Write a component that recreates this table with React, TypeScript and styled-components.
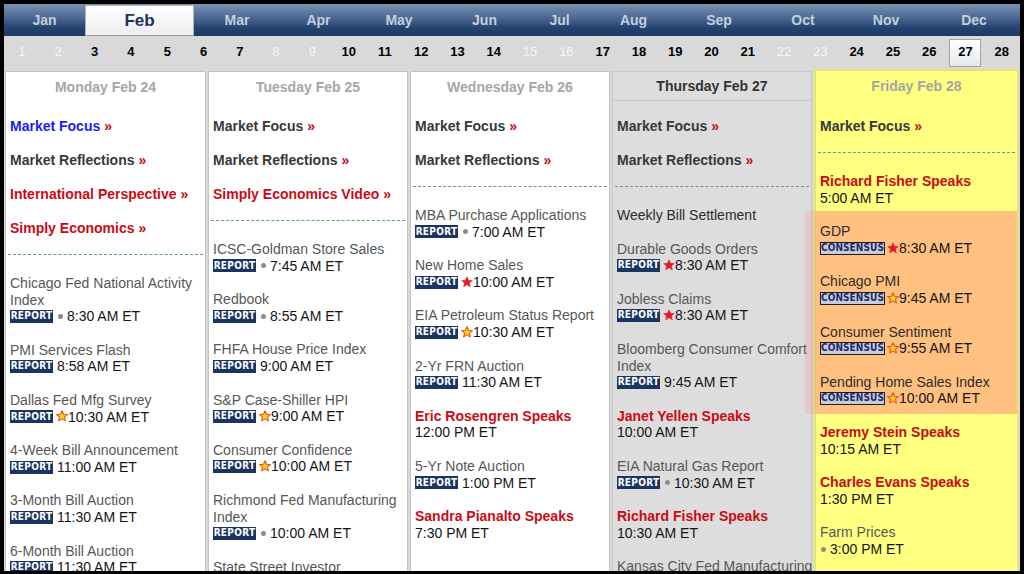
import React from 'react';
import styled, { createGlobalStyle, css } from 'styled-components';

const GlobalStyle = createGlobalStyle`
  html, body {
    margin: 0;
    padding: 0;
    background: #000;
  }
  body {
    font-family: 'Liberation Sans', Arial, sans-serif;
  }
`;

const RED = '#cc0a14';

type Mark = 'none' | 'dot' | 'red' | 'gold';
type Badge = 'report' | 'consensus' | 'none';

interface IEvent {
  title: string;
  speaker?: boolean;
  badge?: Badge;
  mark?: Mark;
  time?: string;
  dark?: boolean;
}

interface ILink {
  text: string;
  tone: 'blue' | 'dark' | 'red';
}

interface IDay {
  label: string;
  kind: 'past' | 'today' | 'selected';
  width: number;
  links: ILink[];
  events: IEvent[];
  highlight?: IEvent[];
  after?: IEvent[];
}

const months: [string, number][] = [
  ['Jan', 81], ['Feb', 109], ['Mar', 86], ['Apr', 77], ['May', 84], ['Jun', 87],
  ['Jul', 63], ['Aug', 85], ['Sep', 86], ['Oct', 82], ['Nov', 84], ['Dec', 92],
];

const weekend = [1, 2, 8, 9, 15, 16, 22, 23];

const days: IDay[] = [
  {
    label: 'Monday Feb 24',
    kind: 'past',
    width: 201,
    links: [
      { text: 'Market Focus', tone: 'blue' },
      { text: 'Market Reflections', tone: 'dark' },
      { text: 'International Perspective', tone: 'red' },
      { text: 'Simply Economics', tone: 'red' },
    ],
    events: [
      { title: 'Chicago Fed National Activity\nIndex', badge: 'report', mark: 'dot', time: '8:30 AM ET' },
      { title: 'PMI Services Flash', badge: 'report', time: '8:58 AM ET' },
      { title: 'Dallas Fed Mfg Survey', badge: 'report', mark: 'gold', time: '10:30 AM ET' },
      { title: '4-Week Bill Announcement', badge: 'report', time: '11:00 AM ET' },
      { title: '3-Month Bill Auction', badge: 'report', time: '11:30 AM ET' },
      { title: '6-Month Bill Auction', badge: 'report', time: '11:30 AM ET' },
    ],
  },
  {
    label: 'Tuesday Feb 25',
    kind: 'past',
    width: 200,
    links: [
      { text: 'Market Focus', tone: 'dark' },
      { text: 'Market Reflections', tone: 'dark' },
      { text: 'Simply Economics Video', tone: 'red' },
    ],
    events: [
      { title: 'ICSC-Goldman Store Sales', badge: 'report', mark: 'dot', time: '7:45 AM ET' },
      { title: 'Redbook', badge: 'report', mark: 'dot', time: '8:55 AM ET' },
      { title: 'FHFA House Price Index', badge: 'report', time: '9:00 AM ET' },
      { title: 'S&P Case-Shiller HPI', badge: 'report', mark: 'gold', time: '9:00 AM ET' },
      { title: 'Consumer Confidence', badge: 'report', mark: 'gold', time: '10:00 AM ET' },
      { title: 'Richmond Fed Manufacturing\nIndex', badge: 'report', mark: 'dot', time: '10:00 AM ET' },
      { title: 'State Street Investor\nConfidence Index', badge: 'report', time: '10:00 AM ET' },
    ],
  },
  {
    label: 'Wednesday Feb 26',
    kind: 'past',
    width: 200,
    links: [
      { text: 'Market Focus', tone: 'dark' },
      { text: 'Market Reflections', tone: 'dark' },
    ],
    events: [
      { title: 'MBA Purchase Applications', badge: 'report', mark: 'dot', time: '7:00 AM ET' },
      { title: 'New Home Sales', badge: 'report', mark: 'red', time: '10:00 AM ET' },
      { title: 'EIA Petroleum Status Report', badge: 'report', mark: 'gold', time: '10:30 AM ET' },
      { title: '2-Yr FRN Auction', badge: 'report', time: '11:30 AM ET' },
      { title: 'Eric Rosengren Speaks', speaker: true, time: '12:00 PM ET' },
      { title: '5-Yr Note Auction', badge: 'report', time: '1:00 PM ET' },
      { title: 'Sandra Pianalto Speaks', speaker: true, time: '7:30 PM ET' },
    ],
  },
  {
    label: 'Thursday Feb 27',
    kind: 'today',
    width: 200,
    links: [
      { text: 'Market Focus', tone: 'dark' },
      { text: 'Market Reflections', tone: 'dark' },
    ],
    events: [
      { title: 'Weekly Bill Settlement', dark: true },
      { title: 'Durable Goods Orders', badge: 'report', mark: 'red', time: '8:30 AM ET' },
      { title: 'Jobless Claims', badge: 'report', mark: 'red', time: '8:30 AM ET' },
      { title: 'Bloomberg Consumer Comfort\nIndex', badge: 'report', time: '9:45 AM ET' },
      { title: 'Janet Yellen Speaks', speaker: true, time: '10:00 AM ET' },
      { title: 'EIA Natural Gas Report', badge: 'report', mark: 'dot', time: '10:30 AM ET' },
      { title: 'Richard Fisher Speaks', speaker: true, time: '10:30 AM ET' },
      { title: 'Kansas City Fed Manufacturing\nIndex', badge: 'report', time: '11:00 AM ET' },
    ],
  },
  {
    label: 'Friday Feb 28',
    kind: 'selected',
    width: 205,
    links: [{ text: 'Market Focus', tone: 'dark' }],
    events: [{ title: 'Richard Fisher Speaks', speaker: true, time: '5:00 AM ET' }],
    highlight: [
      { title: 'GDP', badge: 'consensus', mark: 'red', time: '8:30 AM ET', dark: true },
      { title: 'Chicago PMI', badge: 'consensus', mark: 'gold', time: '9:45 AM ET', dark: true },
      { title: 'Consumer Sentiment', badge: 'consensus', mark: 'gold', time: '9:55 AM ET', dark: true },
      { title: 'Pending Home Sales Index', badge: 'consensus', mark: 'gold', time: '10:00 AM ET', dark: true },
    ],
    after: [
      { title: 'Jeremy Stein Speaks', speaker: true, time: '10:15 AM ET' },
      { title: 'Charles Evans Speaks', speaker: true, time: '1:30 PM ET' },
      { title: 'Farm Prices', badge: 'none', mark: 'dot', time: '3:00 PM ET' },
    ],
  },
];

const Frame = styled.div`
  width: 1024px;
  height: 574px;
  box-sizing: border-box;
  border: 4px solid #000;
  border-bottom-width: 3px;
  background: #d9d9d9;
  display: flex;
  flex-direction: column;
  overflow: hidden;
`;

const MonthBar = styled.div`
  display: flex;
  flex: none;
  height: 32px;
  background: linear-gradient(#7a92b3 0%, #4a6690 45%, #24426f 75%, #1d3a66 100%);
`;

const MonthCell = styled.div<{ $w: number; $active?: boolean }>`
  width: ${(p) => p.$w}px;
  flex: none;
  box-sizing: border-box;
  display: flex;
  align-items: center;
  justify-content: center;
  font-size: 14px;
  font-weight: bold;
  color: #c4cfdc;
  ${(p) =>
    p.$active &&
    css`
      margin-top: 1px;
      font-size: 17px;
      color: #1b325a;
      background: linear-gradient(#ffffff, #eeeef0);
      border: 1px solid #b4b4b4;
      border-bottom-color: #9a9a9a;
    `}
`;

const DayRow = styled.div`
  display: flex;
  flex: none;
  height: 30px;
  background: #d9d9d9;
`;

const DayCell = styled.div`
  flex: 1;
  display: flex;
  justify-content: center;
  position: relative;
`;

const DayNum = styled.span<{ $weekend?: boolean; $current?: boolean }>`
  display: flex;
  align-items: center;
  justify-content: center;
  height: 30px;
  font-size: 13px;
  font-weight: ${(p) => (p.$weekend ? 'normal' : 'bold')};
  color: ${(p) => (p.$weekend ? '#f6f6f6' : '#000')};
  ${(p) =>
    p.$current &&
    css`
      box-sizing: border-box;
      margin-top: 3px;
      width: 32px;
      height: 28px;
      border: 1px solid #a4a4a4;
      background: linear-gradient(#ffffff, #e6e8ec);
      position: relative;
      z-index: 2;
      padding-bottom: 3px;
    `}
`;

const Columns = styled.div`
  flex: 1;
  min-height: 0;
  display: flex;
  gap: 2px;
  padding: 5px 0 0 1px;
`;

const Column = styled.div<{ $w: number; $kind: IDay['kind'] }>`
  width: ${(p) => p.$w}px;
  flex: none;
  box-sizing: border-box;
  background: #fff;
  border: 1px solid #c4c4c4;
  border-bottom: none;
  ${(p) =>
    p.$kind === 'today' &&
    css`
      background: #dddddd;
      border-color: #c8c8c8;
    `}
  ${(p) =>
    p.$kind === 'selected' &&
    css`
      margin-top: -2px;
      background: #ffff80;
      border: 2px solid #e4e470;
      border-bottom: none;
    `}
`;

const DayHead = styled.div<{ $kind: IDay['kind'] }>`
  height: ${(p) => (p.$kind === 'selected' ? 30 : 29)}px;
  display: flex;
  align-items: center;
  justify-content: center;
  font-size: 14px;
  font-weight: bold;
  color: ${(p) => (p.$kind === 'today' ? '#333' : '#a6a6a6')};
  ${(p) =>
    p.$kind === 'today' &&
    css`
      border-bottom: 1px solid #c2c2c2;
      height: 28px;
    `}
`;

const LinkList = styled.div`
  padding: 8px 0 0 4px;
`;

const LinkRow = styled.div<{ $tone: ILink['tone'] }>`
  line-height: 34px;
  font-size: 14px;
  font-weight: bold;
  white-space: nowrap;
  color: ${(p) => (p.$tone === 'blue' ? '#1c1cf5' : p.$tone === 'red' ? RED : '#383838')};
  span {
    color: ${RED};
  }
`;

const Divider = styled.div`
  margin: 9px 2px 20px 2px;
  border-top: 1px dashed #5b9c9c;
`;

const EventList = styled.div`
  padding-left: 4px;
`;

const EventBlock = styled.div`
  margin-bottom: 17px;
  font-size: 14px;
  line-height: 16.6px;
`;

const Title = styled.div<{ $speaker?: boolean; $dark?: boolean }>`
  white-space: pre;
  color: ${(p) => (p.$speaker ? RED : p.$dark ? '#2c2c2c' : '#575757')};
  font-weight: ${(p) => (p.$speaker ? 'bold' : 'normal')};
`;

const TimeRow = styled.div`
  display: flex;
  align-items: center;
  height: 16.6px;
  color: #141414;
  white-space: nowrap;
`;

const ReportBadge = styled.span`
  flex: none;
  width: 43px;
  height: 13px;
  display: inline-flex;
  align-items: center;
  justify-content: center;
  background: #1b3563;
  color: #fff;
  font-family: 'DejaVu Sans Condensed', 'Liberation Sans Narrow', 'Liberation Sans', sans-serif;
  font-size: 10px;
  font-weight: bold;
  letter-spacing: 0.3px;
  margin-right: 4px;
`;

const ConsensusBadge = styled.span`
  flex: none;
  box-sizing: border-box;
  width: 65px;
  height: 13px;
  display: inline-flex;
  align-items: center;
  justify-content: center;
  background: #c8ccd8;
  border: 1px solid #1c1c1c;
  color: #1f2a6c;
  font-family: 'DejaVu Sans Condensed', 'Liberation Sans Narrow', 'Liberation Sans', sans-serif;
  font-size: 10px;
  font-weight: bold;
  letter-spacing: 0.1px;
  margin-right: 3px;
`;

const Dot = styled.span`
  flex: none;
  width: 5px;
  height: 5px;
  border-radius: 50%;
  background: #8c8c8c;
  margin: 0 4px 0 1px;
`;

const StarIcon = styled.svg`
  flex: none;
  width: 12px;
  height: 12px;
  margin: 0 0 1px -1px;
`;

const Highlight = styled.div`
  position: relative;
  margin: -12px 0 10px -4px;
  padding: 12px 0 7px 4px;
  background: #ffc080;
  &::before {
    content: '';
    position: absolute;
    top: 0;
    bottom: 0;
    left: -11px;
    width: 11px;
    background: rgba(255, 130, 110, 0.22);
  }
  ${EventBlock}:last-child {
    margin-bottom: 0;
  }
`;

function Star({ tone }: { tone: 'red' | 'gold' }) {
  return (
    <StarIcon viewBox="0 0 24 24">
      <path
        d="M12 1.5l3.1 7.1 7.6.6-5.8 5 1.8 7.5L12 17.7l-6.7 4 1.8-7.5-5.8-5 7.6-.6z"
        fill={tone === 'red' ? '#e5182b' : '#ffd41e'}
        stroke={tone === 'red' ? '#e5182b' : '#e8501a'}
        strokeWidth={tone === 'red' ? 1 : 2.2}
        strokeLinejoin="round"
      />
    </StarIcon>
  );
}

function EventItem({ ev }: { ev: IEvent }) {
  return (
    <EventBlock>
      <Title $speaker={ev.speaker} $dark={ev.dark}>
        {ev.title}
      </Title>
      {ev.time && (
        <TimeRow>
          {ev.badge === 'report' && <ReportBadge>REPORT</ReportBadge>}
          {ev.badge === 'consensus' && <ConsensusBadge>CONSENSUS</ConsensusBadge>}
          {ev.mark === 'dot' && <Dot />}
          {(ev.mark === 'red' || ev.mark === 'gold') && <Star tone={ev.mark} />}
          {ev.time}
        </TimeRow>
      )}
    </EventBlock>
  );
}

export default function App() {
  return (
    <>
      <GlobalStyle />
      <Frame>
        <MonthBar>
          {months.map(([m, w]) => (
            <MonthCell key={m} $w={w} $active={m === 'Feb'}>
              {m}
            </MonthCell>
          ))}
        </MonthBar>
        <DayRow>
          {Array.from({ length: 28 }, (_, i) => i + 1).map((d) => (
            <DayCell key={d}>
              <DayNum $weekend={weekend.includes(d)} $current={d === 27}>
                {d}
              </DayNum>
            </DayCell>
          ))}
        </DayRow>
        <Columns>
          {days.map((day) => (
            <Column key={day.label} $w={day.width} $kind={day.kind}>
              <DayHead $kind={day.kind}>{day.label}</DayHead>
              <LinkList>
                {day.links.map((l) => (
                  <LinkRow key={l.text} $tone={l.tone}>
                    {l.text} <span>»</span>
                  </LinkRow>
                ))}
              </LinkList>
              <Divider />
              <EventList>
                {day.events.map((ev, i) => (
                  <EventItem key={i} ev={ev} />
                ))}
                {day.highlight && (
                  <Highlight>
                    {day.highlight.map((ev, i) => (
                      <EventItem key={i} ev={ev} />
                    ))}
                  </Highlight>
                )}
                {day.after?.map((ev, i) => (
                  <EventItem key={i} ev={ev} />
                ))}
              </EventList>
            </Column>
          ))}
        </Columns>
      </Frame>
    </>
  );
}
